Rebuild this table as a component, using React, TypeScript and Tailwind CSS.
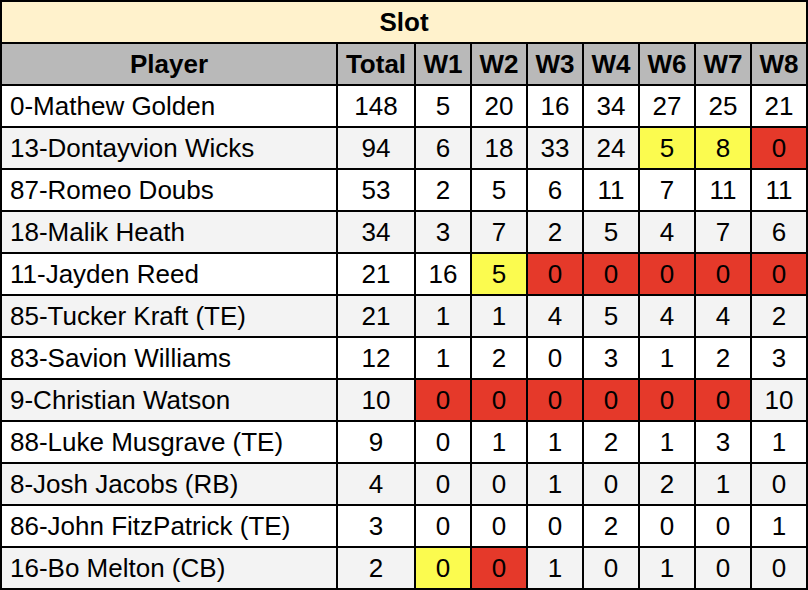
import React from "react";

type Mark = "y" | "r" | undefined;

// each week cell: value, optional highlight
const rows: { name: string; total: number; weeks: number[]; marks?: Mark[] }[] = [
  { name: "0-Mathew Golden", total: 148, weeks: [5, 20, 16, 34, 27, 25, 21] },
  { name: "13-Dontayvion Wicks", total: 94, weeks: [6, 18, 33, 24, 5, 8, 0], marks: [, , , , "y", "y", "r"] },
  { name: "87-Romeo Doubs", total: 53, weeks: [2, 5, 6, 11, 7, 11, 11] },
  { name: "18-Malik Heath", total: 34, weeks: [3, 7, 2, 5, 4, 7, 6] },
  { name: "11-Jayden Reed", total: 21, weeks: [16, 5, 0, 0, 0, 0, 0], marks: [, "y", "r", "r", "r", "r", "r"] },
  { name: "85-Tucker Kraft (TE)", total: 21, weeks: [1, 1, 4, 5, 4, 4, 2] },
  { name: "83-Savion Williams", total: 12, weeks: [1, 2, 0, 3, 1, 2, 3] },
  { name: "9-Christian Watson", total: 10, weeks: [0, 0, 0, 0, 0, 0, 10], marks: ["r", "r", "r", "r", "r", "r"] },
  { name: "88-Luke Musgrave (TE)", total: 9, weeks: [0, 1, 1, 2, 1, 3, 1] },
  { name: "8-Josh Jacobs (RB)", total: 4, weeks: [0, 0, 1, 0, 2, 1, 0] },
  { name: "86-John FitzPatrick (TE)", total: 3, weeks: [0, 0, 0, 2, 0, 0, 1] },
  { name: "16-Bo Melton (CB)", total: 2, weeks: [0, 0, 1, 0, 1, 0, 0], marks: ["y", "r"] },
];

const weeks = ["W1", "W2", "W3", "W4", "W6", "W7", "W8"];

export default function App() {
  return (
    <div className="w-[808px] h-[590px] bg-white font-['Liberation_Sans',Arial,sans-serif] text-black">
      <div className="grid grid-cols-[334px_76px_repeat(7,54px)] auto-rows-[40px] gap-[2px] bg-black p-[2px] text-[26px] leading-none">
        <div className="col-span-9 flex items-center justify-center bg-[#fff2cc] font-bold">Slot</div>

        <div className="flex items-center justify-center bg-[#b9b9b9] font-bold">Player</div>
        <div className="flex items-center justify-center bg-[#b9b9b9] font-bold">Total</div>
        {weeks.map((w) => (
          <div key={w} className="flex items-center justify-center bg-[#b9b9b9] font-bold">
            {w}
          </div>
        ))}

        {rows.map((r, i) => {
          const bg = i % 2 === 0 ? "bg-white" : "bg-[#f3f3f3]";
          return (
            <React.Fragment key={r.name}>
              <div className={`flex items-center px-2 ${bg}`}>{r.name}</div>
              <div className={`flex items-center justify-center ${bg}`}>{r.total}</div>
              {r.weeks.map((v, j) => {
                const m = r.marks?.[j];
                const cls = m === "y" ? "bg-[#fbfb4f]" : m === "r" ? "bg-[#e5392a]" : bg;
                return (
                  <div key={j} className={`flex items-center justify-center ${cls}`}>
                    {v}
                  </div>
                );
              })}
            </React.Fragment>
          );
        })}
      </div>
    </div>
  );
}
